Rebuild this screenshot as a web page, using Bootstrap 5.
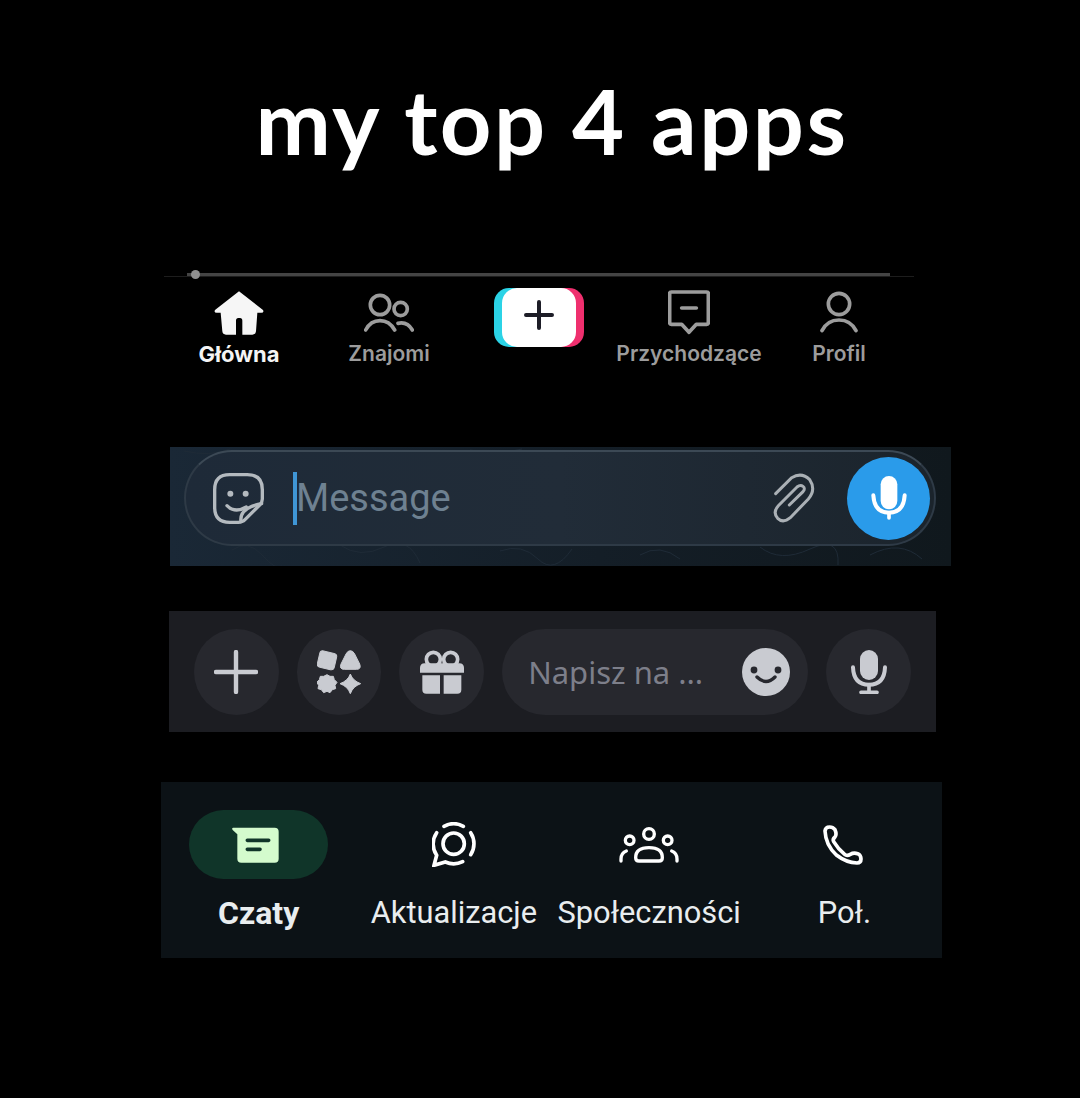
<!DOCTYPE html>
<html lang="pl">
<head>
<meta charset="utf-8">
<title>my top 4 apps</title>
<link href="https://cdn.jsdelivr.net/npm/bootstrap@5.3.1/dist/css/bootstrap.min.css" rel="stylesheet">
<style>
body { background: #000; width: 1080px; height: 1098px; overflow: hidden; }
svg { display: block; flex-shrink: 0; }

.top-title { height: 268px; padding: 60px 0 0 24px; margin: 0; color: #fff; font: 700 90px/1.35 "Lato", sans-serif; letter-spacing: 2.5px; text-align: center; }

/* tiktok */
.tt-bar { width: 750px; height: 110px; margin-left: 164px; }
.tt-track { height: 9px; padding: 5px 24px 0 23px; border-bottom: 1px solid #1d1d1d; }
.tt-line { height: 3px; background: #444; position: relative; }
.tt-thumb { position: absolute; left: 4px; top: -3px; width: 9px; height: 9px; border-radius: 50%; background: #8f8f8f; }
.tt-tabs { display: grid; grid-template-columns: repeat(5, 1fr); padding-top: 13px; }
.tt-tab { display: flex; flex-direction: column; align-items: center; height: 80px; color: #9c9c9c; font: 600 21px/24px "Inter", sans-serif; white-space: nowrap; }
.tt-tab svg { height: 46px; margin-bottom: 6px; }
.tt-on { color: #f4f4f4; font-size: 22px; font-weight: 700; }
.tt-add { width: 74px; height: 59px; margin-top: -2px; border-radius: 15px; background: #fff; box-shadow: -8px 0 0 #2bd3e6, 8px 0 0 #ef2f6e; display: flex; align-items: center; justify-content: center; }

/* telegram */
.tg-bar { position: relative; width: 781px; height: 119px; margin: 69px 0 0 170px; padding: 3px 15px 0 14px; background: linear-gradient(90deg, #1a2836, #141e27 55%, #10181d); }
.tg-doodle { position: absolute; left: 0; top: 0; }
.tg-pill { position: relative; height: 96px; border: 2px solid #2e3a46; border-top-color: #3c4955; border-radius: 48px; background: linear-gradient(90deg, #1e2a38, #212c38 50%, #1b242c); padding: 0 4px 0 27px; }
.tg-cursor { width: 4px; height: 53px; margin-left: 29px; background: #3f96d6; }
.tg-text { margin-left: -1px; color: #6e8191; font: 400 38px/1 "Roboto", sans-serif; }
.tg-mic { width: 83px; height: 83px; border-radius: 50%; background: #2a9bea; margin-left: 32px; }

/* discord */
.dc-bar { width: 767px; height: 121px; margin: 45px 0 0 169px; padding: 18px 25px; background: #1c1d22; gap: 18px; }
.dc-btn { width: 85px; height: 86px; border-radius: 50%; background: #27282e; }
.dc-input { width: 307px; height: 86px; border-radius: 43px; background: #27282e; padding: 0 18px 0 26px; color: #7d7f8a; font: 400 31px/1 "Noto Sans", sans-serif; }

/* whatsapp */
.wa-bar { display: grid; grid-template-columns: repeat(4, 1fr); width: 781px; height: 176px; margin: 50px 0 0 161px; padding-top: 28px; background: #0c1216; }
.wa-tab { display: flex; flex-direction: column; align-items: center; color: #e9edef; font: 400 30.8px/36px "Roboto", sans-serif; white-space: nowrap; }
.wa-icon { width: 139px; height: 69px; border-radius: 35px; margin-bottom: 16px; }
.wa-on { background: #103529; padding-right: 6px; }
.wa-phone { padding-right: 3px; }
.wa-bold { font-size: 32px; font-weight: 700; }
</style>
</head>
<body>

<h1 class="top-title">my top 4 apps</h1>

<!-- tiktok bar -->
<div class="tt-bar">
    <div class="tt-track"><div class="tt-line"><div class="tt-thumb"></div></div></div>
    <div class="tt-tabs">
        <div class="tt-tab tt-on">
            <svg width="50" viewBox="0 0 150 138"><path fill="#f6f6f6" d="M75 4 147 60Q151 68 142 68H130L126 124Q125 134 115 134H85V92Q85 84 78 84H73Q66 84 66 92V134H36Q26 134 25 124L20 68H8Q-1 68 3 60Z"/></svg>
            <span>Główna</span>
        </div>
        <div class="tt-tab">
            <svg width="50" viewBox="0 0 150 138" fill="none" stroke="#9c9c9c" stroke-width="11" stroke-linecap="round"><circle cx="48" cy="45" r="29"/><circle cx="110" cy="57" r="20"/><path d="M5 120Q20 92 48 92T92 120"/><path d="M102 100Q130 94 145 120"/></svg>
            <span>Znajomi</span>
        </div>
        <div class="tt-tab">
            <div class="tt-add">
                <svg width="30" height="30" viewBox="0 0 30 30"><path d="M15 2V28M2 15H28" stroke="#1d1d27" stroke-width="4" stroke-linecap="round"/></svg>
            </div>
        </div>
        <div class="tt-tab">
            <svg width="42" viewBox="0 0 126 138" fill="none" stroke="#9c9c9c" stroke-width="11" stroke-linejoin="round"><path d="M10 6H116Q121 6 121 11V98Q121 103 116 103H85L63 127 41 103H10Q5 103 5 98V11Q5 6 10 6Z"/><path d="M41 54H85" stroke-linecap="round"/></svg>
            <span>Przychodzące</span>
        </div>
        <div class="tt-tab">
            <svg width="38" viewBox="0 0 114 138" fill="none" stroke="#9c9c9c" stroke-width="11" stroke-linecap="round"><circle cx="57" cy="42" r="32"/><path d="M6 122Q22 90 57 90T108 122"/></svg>
            <span>Profil</span>
        </div>
    </div>
</div>

<!-- telegram bar -->
<div class="tg-bar">
    <svg class="tg-doodle" width="781" height="119" viewBox="0 0 781 119" fill="none" stroke="#1f2b37" stroke-width="1">
        <path d="M62 103Q78 92 92 108T112 119M170 98Q190 112 214 100T250 116M330 104Q352 96 368 112T402 102M470 108Q490 96 510 112M590 100Q610 116 640 102T668 118M14 4Q40 10 60 2M300 3Q330 8 352 2M700 108Q730 92 752 112"/>
    </svg>
    <div class="tg-pill d-flex align-items-center">
        <svg width="51" height="51" viewBox="0 0 153 153" fill="none" stroke="#b4babf" stroke-width="10" stroke-linecap="round">
            <path d="M50 5H103Q148 5 148 50V78Q148 88 140 96L96 140Q88 148 76 148H50Q5 148 5 103V50Q5 5 50 5Z"/>
            <path d="M42 98Q66 122 100 102"/>
            <path d="M84 146Q78 104 146 92"/>
            <circle cx="52" cy="62" r="4" fill="#b4babf"/><circle cx="98" cy="62" r="4" fill="#b4babf"/>
        </svg>
        <div class="tg-cursor"></div>
        <span class="tg-text flex-grow-1">Message</span>
        <svg width="44" height="50" viewBox="0 0 132 150" fill="none" stroke="#aab0b5" stroke-width="9" stroke-linecap="round"><path d="M55 96 96 56Q104 46 96 40 88 34 78 42L22 98Q4 118 20 136 36 152 58 134L112 78Q136 50 116 20 92-4 62 14L14 62"/></svg>
        <div class="tg-mic d-flex align-items-center justify-content-center">
            <svg width="36" height="44" viewBox="0 0 108 132"><rect x="29" y="0" width="50" height="100" rx="25" fill="#fff"/><path d="M7 58Q10 110 54 110T101 58" fill="none" stroke="#fff" stroke-width="12" stroke-linecap="round"/><path d="M54 110V126" stroke="#fff" stroke-width="11" stroke-linecap="round"/></svg>
        </div>
    </div>
</div>

<!-- discord bar -->
<div class="dc-bar d-flex">
    <div class="dc-btn d-flex align-items-center justify-content-center">
        <svg width="44" height="44" viewBox="0 0 44 44"><path d="M22 2V42M2 22H42" stroke="#c9cbd1" stroke-width="4.4" stroke-linecap="round"/></svg>
    </div>
    <div class="dc-btn d-flex align-items-center justify-content-center">
        <svg width="44" height="44" viewBox="0 0 132 132" fill="#c9cbd1" stroke="#c9cbd1" stroke-width="3" stroke-linejoin="round">
            <rect x="4" y="6" width="52" height="50" rx="10" transform="rotate(13 30 31)"/>
            <path d="M100 2Q108 2 113 12L128 42Q134 58 118 58H82Q66 58 72 42L87 12Q92 2 100 2Z"/>
            <path d="M30 74 39 79 49 79 52 89 60 97 54 106 56 116 46 119 39 128 30 124 20 128 13 119 3 116 5 106 -1 97 7 89 10 79 20 79Z"/>
            <path d="M100 72Q107 92 131 101 108 109 100 131 92 109 69 101 93 92 100 72Z"/>
        </svg>
    </div>
    <div class="dc-btn d-flex align-items-center justify-content-center">
        <svg width="44" height="44" viewBox="0 0 132 132">
            <circle cx="40" cy="28" r="21" fill="none" stroke="#c9cbd1" stroke-width="11"/>
            <circle cx="92" cy="28" r="21" fill="none" stroke="#c9cbd1" stroke-width="11"/>
            <path d="M0 54Q0 40 14 40H118Q132 40 132 54V68H0Z" fill="#c9cbd1"/>
            <path d="M7 76H60V131H19Q7 131 7 119ZM71 76H124V119Q124 131 112 131H71Z" fill="#c9cbd1"/>
        </svg>
    </div>
    <div class="dc-input d-flex align-items-center justify-content-between">
        <span>Napisz na ...</span>
        <svg width="48" height="48" viewBox="0 0 48 48"><circle cx="24" cy="24" r="24" fill="#c9cbd1"/><circle cx="12" cy="22" r="3.4" fill="#27282e"/><circle cx="36" cy="22" r="3.4" fill="#27282e"/><path d="M15 29Q24 38 33 29" fill="none" stroke="#27282e" stroke-width="3.4" stroke-linecap="round"/></svg>
    </div>
    <div class="dc-btn d-flex align-items-center justify-content-center">
        <svg width="36" height="44" viewBox="0 0 108 132"><rect x="27" y="0" width="54" height="90" rx="27" fill="#c9cbd1"/><path d="M6 52Q8 104 54 104T102 52" fill="none" stroke="#c9cbd1" stroke-width="12" stroke-linecap="round"/><path d="M54 104V126M30 127H78" stroke="#c9cbd1" stroke-width="11" stroke-linecap="round"/></svg>
    </div>
</div>

<!-- whatsapp bar -->
<div class="wa-bar">
    <div class="wa-tab wa-bold">
        <div class="wa-icon wa-on d-flex align-items-center justify-content-center">
            <svg width="47" height="36" viewBox="0 0 141 108"><path fill="#d4fbcd" d="M4 2H128Q140 2 140 14V95Q140 107 128 107H28Q16 107 16 95V22L2 9Q-2 3 4 2Z"/><path d="M46 40H110M46 67H84" stroke="#103529" stroke-width="11" stroke-linecap="round"/></svg>
        </div>
        <span>Czaty</span>
    </div>
    <div class="wa-tab">
        <div class="wa-icon d-flex align-items-center justify-content-center">
            <svg width="44" height="45" viewBox="0 0 132 135" fill="none" stroke="#fff" stroke-width="11" stroke-linecap="round"><circle cx="65" cy="65" r="32"/><path d="M36 13A60 60 0 0 1 94 13"/><path d="M116 32A60 60 0 0 1 116 98"/><path d="M92 119A60 60 0 0 1 40 120L6 130 14 100A60 60 0 0 1 14 32"/></svg>
        </div>
        <span>Aktualizacje</span>
    </div>
    <div class="wa-tab">
        <div class="wa-icon d-flex align-items-center justify-content-center">
            <svg width="60" height="36" viewBox="0 0 180 108" fill="none" stroke="#fff" stroke-width="10" stroke-linecap="round"><circle cx="90" cy="21" r="16"/><circle cx="32" cy="40" r="13"/><circle cx="146" cy="40" r="13"/><path d="M50 92Q50 62 90 62T130 92Q130 102 120 102H60Q50 102 50 92Z"/><path d="M22 72Q6 78 6 96V102"/><path d="M158 72Q174 78 174 96V102"/></svg>
        </div>
        <span>Społeczności</span>
    </div>
    <div class="wa-tab">
        <div class="wa-icon wa-phone d-flex align-items-center justify-content-center">
            <svg width="40" height="40" viewBox="0 0 120 120" fill="none" stroke="#fff" stroke-width="11" stroke-linejoin="round"><path d="M20 6Q7 6 6 18 8 60 40 90 70 113 102 114 114 114 114 102 114 90 104 86 92 82 82 88 72 94 65 88 45 72 32 50 28 42 36 36 42 28 36 14 30 6 20 6Z"/></svg>
        </div>
        <span>Poł.</span>
    </div>
</div>

</body>
</html>
